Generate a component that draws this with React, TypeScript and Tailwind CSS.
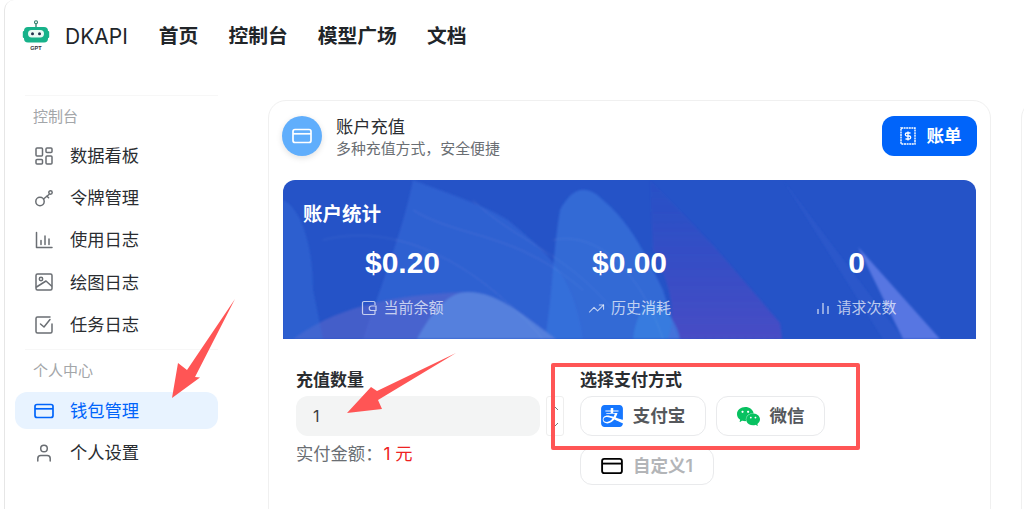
import React from "react";
import { SiAlipay, SiWechat } from "react-icons/si";
import { TrendingUp } from "lucide-react";

const FONT = "font-['Inter','Noto_Sans_CJK_SC',sans-serif]";

const I = ({ children, size = 20, className = "" }: { children: React.ReactNode; size?: number; className?: string }) => (
  <svg width={size} height={size} viewBox="0 0 20 20" fill="none" stroke="currentColor" strokeWidth="1.5" strokeLinecap="round" strokeLinejoin="round" className={className}>
    {children}
  </svg>
);

const GridIcon = () => (
  <I>
    <rect x="2" y="2" width="6.5" height="8" rx="1" />
    <rect x="12" y="2" width="6" height="4.5" rx="1" />
    <rect x="12" y="10" width="6" height="8" rx="1" />
    <rect x="2" y="13.5" width="6.5" height="4.5" rx="1" />
  </I>
);
const KeyIcon = () => (
  <I>
    <circle cx="6" cy="13.5" r="4.2" />
    <path d="M9.5 11 L15 6.5" />
    <circle cx="16.5" cy="4.5" r="1.7" />
    <path d="M13 8.2 l1.6 1.6" />
  </I>
);
const ChartIcon = () => (
  <I>
    <path d="M2.5 2.5 V17.5 H18" />
    <path d="M7 10.5 V14.5 M11 6 V14.5 M15 9 V14.5" />
  </I>
);
const ImageIcon = () => (
  <I>
    <rect x="2" y="2" width="16" height="16" rx="1.5" />
    <circle cx="7" cy="7" r="1.7" />
    <path d="M2.5 15 L12 9 L17.5 14" />
  </I>
);
const CheckIcon = () => (
  <I>
    <path d="M18 9 V16.5 a1.5 1.5 0 0 1 -1.5 1.5 H3.5 A1.5 1.5 0 0 1 2 16.5 V3.5 A1.5 1.5 0 0 1 3.5 2 H16" />
    <path d="M6.5 9 L10 12 L16 4.5" />
  </I>
);
const CardIcon = ({ size = 20, w = 1.7 }: { size?: number; w?: number }) => (
  <svg width={size} height={size} viewBox="0 0 20 20" fill="none" stroke="currentColor" strokeWidth={w} strokeLinejoin="round">
    <rect x="1" y="3.5" width="18" height="13" rx="2" />
    <path d="M1 7.8 H19" />
  </svg>
);
const PersonIcon = () => (
  <I>
    <circle cx="10" cy="5.5" r="3.3" />
    <path d="M3.8 18 V15.5 a3 3 0 0 1 3 -3 h6.4 a3 3 0 0 1 3 3 V18" />
  </I>
);

const Bot = () => (
  <svg width="28" height="34" viewBox="0 0 28 34" fill="none">
    <circle cx="14" cy="3.2" r="1.5" stroke="#2c7a67" strokeWidth="1.1" />
    <path d="M14 4.7 V8" stroke="#2c7a67" strokeWidth="1.3" />
    <rect x="2" y="8" width="24" height="15.5" rx="4" fill="#17b28a" />
    <rect x="0.8" y="12" width="2" height="7" rx="1" fill="#17b28a" />
    <rect x="25.2" y="12" width="2" height="7" rx="1" fill="#17b28a" />
    <rect x="6" y="11" width="16" height="7.5" rx="3.7" fill="#eafaf5" />
    <circle cx="10.5" cy="14.7" r="1.5" fill="#20304a" />
    <circle cx="17.5" cy="14.7" r="1.5" fill="#20304a" />
    <text x="14" y="30.5" textAnchor="middle" fontSize="5.5" fontWeight="700" fill="#30343a" fontFamily="Liberation Sans, sans-serif">GPT</text>
  </svg>
);

const sideItems = [
  { t: "数据看板", i: <GridIcon /> },
  { t: "令牌管理", i: <KeyIcon /> },
  { t: "使用日志", i: <ChartIcon /> },
  { t: "绘图日志", i: <ImageIcon /> },
  { t: "任务日志", i: <CheckIcon /> },
];

const Row = ({ t, i, active }: { t: string; i: React.ReactNode; active?: boolean }) => (
  <div className={`flex h-[37px] w-[203px] items-center rounded-[12px] pl-[19px] ${active ? "bg-[#e8f3ff] text-[#0064fa]" : "text-[#6a6e73]"}`}>
    <span className="flex w-[36px] shrink-0">{i}</span>
    <span className={`text-[17.3px] leading-none ${active ? "text-[#0064fa]" : "text-[#2a2d31]"}`}>{t}</span>
  </div>
);

const Stat = ({ v, l, i }: { v: string; l: string; i: React.ReactNode }) => (
  <div className="flex flex-col items-center">
    <div className="font-['Liberation_Sans',sans-serif] text-[30px] font-bold leading-[36px] text-white">{v}</div>
    <div className="mt-[17px] flex items-center gap-[6px] text-[15px] leading-[20px] text-white/70">
      {i}
      <span>{l}</span>
    </div>
  </div>
);

const HeroArt = () => (
  <svg className="absolute inset-0 h-full w-full" viewBox="0 0 693 159" preserveAspectRatio="none">
    <defs>
      <linearGradient id="p1" x1="0" y1="0" x2="0" y2="1">
        <stop offset="0" stopColor="#4a40c0" stopOpacity="0.08" />
        <stop offset="1" stopColor="#6048c4" stopOpacity="0.6" />
      </linearGradient>
      <filter id="soft"><feGaussianBlur stdDeviation="1.1" /></filter>
    </defs>
    <rect width="693" height="159" fill="#2553c7" />
    <g filter="url(#soft)">
      <path d="M130 0 C170 15 200 25 225 40 C260 70 290 90 300 159 H80 C100 100 120 50 130 0 Z" fill="#3a6edc" opacity="0.5" />
      <path d="M277 30 C290 5 305 5 320 20 C350 45 365 80 380 110 L395 159 H262 C270 110 270 70 277 30 Z" fill="#3a78e0" opacity="0.6" />
      <path d="M367 0 L430 65 L497 143 L499 159 H385 C395 130 385 100 370 70 Z" fill="url(#p1)" />
      <path d="M367 120 C385 130 395 145 397 159 H350 C352 140 358 130 367 120 Z" fill="#3a8ae8" opacity="0.55" />
      <path d="M10 159 C50 130 100 115 185 112 L134 159 Z" fill="#6468cc" opacity="0.5" />
      <path d="M134 159 C150 130 165 112 185 112 C215 112 240 135 273 159 Z" fill="#5580dd" />
      <path d="M0 20 C20 30 30 70 30 110 L40 159 H0 Z" fill="#3a72dc" opacity="0.4" />
      <path d="M500 0 L620 159 H600 Z" fill="#3b63d4" opacity="0.25" />
      <path d="M575 67 L657 159 H620 Z" fill="#5f7ce6" opacity="0.85" />
      <path d="M130 30 C180 60 230 50 300 110 M40 60 C120 40 200 90 260 159 M270 60 C320 50 360 100 380 159 M190 20 C230 60 280 70 330 130" fill="none" stroke="#ffffff" strokeOpacity="0.08" strokeWidth="1" />
    </g>
  </svg>
);

const PayBtn = ({ w, i, t, h = "h-[40px]", muted }: { w: string; i: React.ReactNode; t: string; h?: string; muted?: boolean }) => (
  <div className={`flex items-center justify-center gap-[10px] rounded-[12px] border border-[#e9eaec] bg-white ${w} ${h}`}>
    {i}
    <span className={`text-[17.5px] font-semibold ${muted ? "text-[#b3b5b8]" : "text-[#55585c]"}`}>{t}</span>
  </div>
);

export default function App() {
  return (
    <div className={`relative h-[509px] w-[1024px] overflow-hidden bg-white ${FONT}`}>
      <div className="ml-[4px] h-[540px] rounded-tl-[10px] border-l border-[#e6e6e6]">
        <header className="flex h-[72px] items-center pl-[17px]">
          <Bot />
          <span className="ml-[15px] text-[21px] leading-none text-[#212529]">DKAPI</span>
          <nav className="ml-[31px] flex translate-y-[1px] gap-[30px] text-[19.8px] font-semibold leading-none text-[#212529]">
            <span>首页</span>
            <span>控制台</span>
            <span>模型广场</span>
            <span>文档</span>
          </nav>
        </header>
        <div className="flex">
          <aside className="w-[263px] shrink-0 pl-[10px] pt-[23px]">
            <div className="ml-[10px] w-[193px] border-t border-[#f7f7f7] pt-[11px]">
              <div className="pl-[8px] text-[15px] leading-[20px] text-[#a3a6a9]">控制台</div>
            </div>
            <div className="mt-[10px] flex flex-col gap-[5.3px]">
              {sideItems.map((s) => (
                <Row key={s.t} t={s.t} i={s.i} />
              ))}
            </div>
            <div className="ml-[10px] mt-[6px] w-[193px] border-t border-[#f7f7f7] pt-[11px]">
              <div className="pl-[8px] text-[15px] leading-[20px] text-[#a3a6a9]">个人中心</div>
            </div>
            <div className="mt-[11px] flex flex-col gap-[5.3px]">
              <Row t="钱包管理" i={<CardIcon />} active />
              <Row t="个人设置" i={<PersonIcon />} />
            </div>
          </aside>
          <main className="mt-[28px] h-[500px] w-[723px] shrink-0 self-start rounded-t-[18px] border border-[#f0f0f0] px-[14px] pt-[15px]">
            <div className="-mx-[1px] flex h-[40px] justify-between">
              <div className="flex">
                <div className="flex h-[40px] w-[40px] items-center justify-center rounded-full bg-[#60aefc] text-white shadow-[0_2px_6px_rgba(0,0,0,0.12)]">
                  <CardIcon />
                </div>
                <div className="ml-[14px]">
                  <div className="text-[17.3px] leading-[22px] text-[#2a2d31]">账户充值</div>
                  <div className="mt-[1px] text-[14.9px] leading-[20px] text-[#6a6e73]">多种充值方式，安全便捷</div>
                </div>
              </div>
              <div className="flex h-[40px] w-[95px] items-center justify-center gap-[11px] rounded-[12px] bg-[#0064fa] pl-[2px] text-white">
                <svg width="16" height="18" viewBox="0 0 16 18" fill="none" stroke="currentColor">
                  <path d="M1 1 H15 V17 H1 Z" strokeWidth="1.4" strokeDasharray="2 0.6" />
                  <path d="M10.5 6 H6.8 a1.5 1.5 0 0 0 0 3 h2.4 a1.5 1.5 0 0 1 0 3 H5.5 M8 4.5 V13.5" strokeWidth="1.3" />
                </svg>
                <span className="text-[17.5px] font-bold leading-none">账单</span>
              </div>
            </div>
            <section className="relative mt-[24px] h-[159px] overflow-hidden rounded-t-[12px]">
              <HeroArt />
              <div className="relative">
                <div className="pl-[20px] pt-[22px] text-[19.5px] font-bold leading-[24px] text-white">账户统计</div>
                <div className="mt-[19px] grid grid-cols-3 px-[6px]">
                  <Stat
                    v="$0.20"
                    l="当前余额"
                    i={
                      <svg width="16" height="16" viewBox="0 0 16 16" fill="none" stroke="currentColor" strokeWidth="1.2">
                        <path d="M14 5 V3 a1.5 1.5 0 0 0 -1.5 -1.5 H3 A1.5 1.5 0 0 0 1.5 3 V13 A1.5 1.5 0 0 0 3 14.5 H13 a1 1 0 0 0 1 -1 V11" />
                        <path d="M15 6 H10.5 a2 2 0 0 0 0 4.5 H15 Z" />
                      </svg>
                    }
                  />
                  <Stat v="$0.00" l="历史消耗" i={<TrendingUp size={17} strokeWidth={1.5} />} />
                  <Stat
                    v="0"
                    l="请求次数"
                    i={
                      <svg width="14" height="14" viewBox="0 0 14 14" stroke="currentColor" strokeWidth="1.4">
                        <path d="M2 8 V13 M7 2 V13 M12 5 V13" />
                      </svg>
                    }
                  />
                </div>
              </div>
            </section>
            <section className="flex pl-[13px] pt-[30px]">
              <div className="w-[268px] shrink-0">
                <div className="text-[17px] font-bold leading-[22px] text-[#2a2d31]">充值数量</div>
                <div className="mt-[5px] flex">
                  <div className="flex h-[40px] w-[244px] items-center rounded-[12px] bg-[#f3f4f4] pl-[17px] text-[16px] text-[#3a3d41]">1</div>
                  <div className="ml-[6px] flex h-[40px] w-[18px] flex-col items-center justify-center gap-[11px] rounded-[3px] border border-[#eeeeee] text-[#777]">
                    <svg width="8" height="5" viewBox="0 0 8 5" fill="none" stroke="currentColor"><path d="M1 4 L4 1 L7 4" /></svg>
                    <svg width="8" height="5" viewBox="0 0 8 5" fill="none" stroke="currentColor"><path d="M1 1 L4 4 L7 1" /></svg>
                  </div>
                </div>
                <div className="mt-[7px] text-[17.3px] leading-[22px] text-[#6a6e73]">
                  实付金额：<span className="ml-[1px] text-[#ee2222]">1 元</span>
                </div>
              </div>
              <div className="ml-[16px]">
                <div className="text-[17px] font-bold leading-[22px] text-[#2a2d31]">选择支付方式</div>
                <div className="mt-[5px] flex gap-[10px]">
                  <PayBtn w="w-[126px]" t="支付宝" i={<SiAlipay size={22} color="#1677ff" />} />
                  <PayBtn w="w-[109px]" t="微信" i={<SiWechat size={23} color="#07c160" />} />
                </div>
                <div className="mt-[11px] flex">
                  <PayBtn w="w-[134px]" h="h-[38px]" muted t="自定义1" i={<span className="flex text-black"><CardIcon size={22} w={1.7} /></span>} />
                </div>
              </div>
            </section>
          </main>
          <div className="ml-[30px] mt-[28px] h-[500px] w-[40px] shrink-0 rounded-tl-[18px] border border-[#f0f0f0]" />
        </div>
      </div>

      {/* annotations laid over the screenshot */}
      <div className="absolute left-[551px] top-[363px] h-[87px] w-[309px] rounded-[2px] border-[4px] border-[#ff5555]" />
      <svg className="absolute left-0 top-0" width="1024" height="509" fill="#ff5555">
        <path d="M235 299 L195 377 L200 377.5 L172 398 L178 363 L187 370 Z" />
        <path d="M456 353 L378 400 L382 409 L347 413 L371 387 L377 391 Z" />
      </svg>
    </div>
  );
}
